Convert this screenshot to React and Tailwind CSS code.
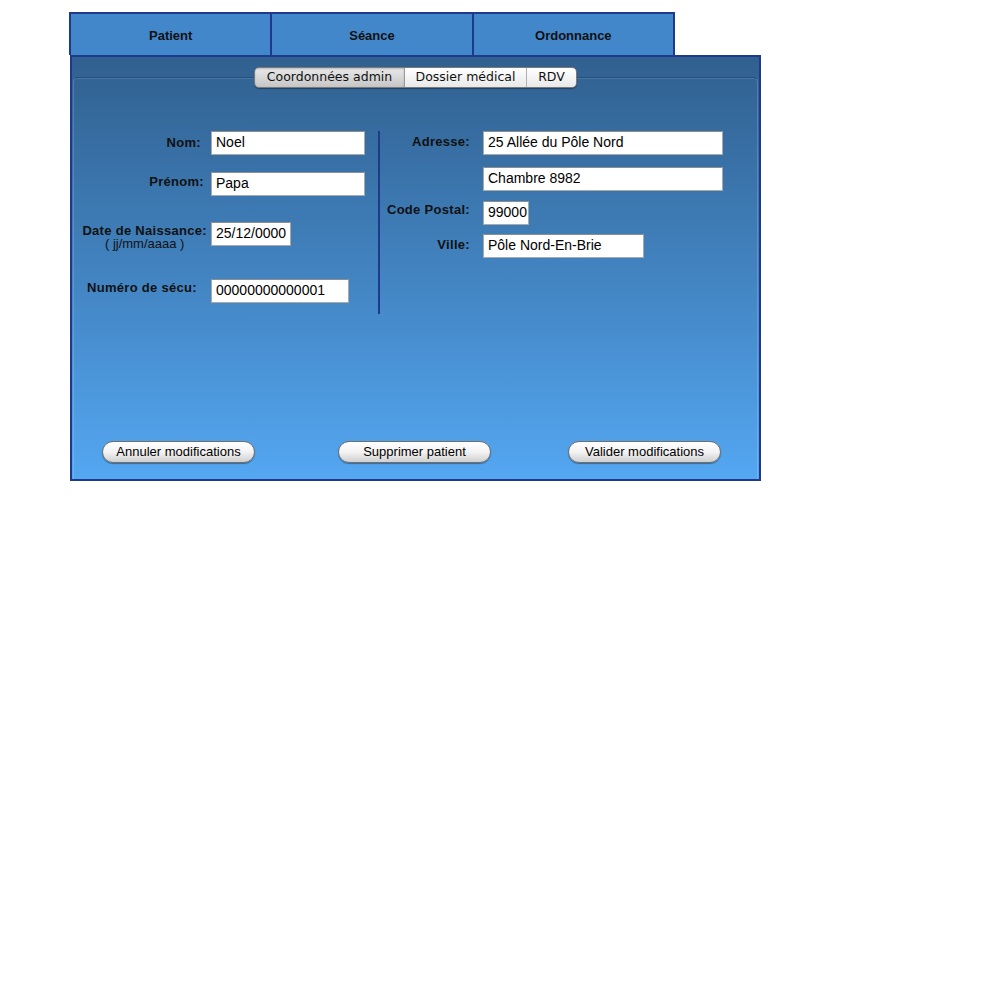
export default function App() {
  const tab =
    "flex-1 flex items-center justify-center pt-[2px] bg-[#4387cb] border-t-2 border-l-2 border-[#1f3a8c] text-[13px] font-bold text-[#111]";
  const field =
    "h-[24px] flex items-center pb-[2px] pl-[4px] bg-white border border-[#a9a9a9] border-t-[#8e8e8e] text-[14px] text-black whitespace-nowrap overflow-hidden";
  const label = "text-[13px] font-bold leading-[16px] text-[#111] tracking-[0.3px] whitespace-nowrap";
  const btn =
    "h-[22px] w-[153px] rounded-full border border-[#6f6f6f] bg-linear-to-b from-white via-[#f3f3f3] to-[#cfcfcf] shadow-[0_1px_1px_rgba(0,0,0,0.35)] flex items-center justify-center text-[13px] text-black";

  return (
    <div className="min-h-[1000px] bg-white pl-[69px] pt-[12px] font-['Liberation_Sans',Arial,sans-serif]">
      {/* top tabs */}
      <div className="flex w-[606px] h-[43px]">
        <div className={tab}>Patient</div>
        <div className={tab}>Séance</div>
        <div className={tab + " border-r-2"}>Ordonnance</div>
      </div>

      {/* panel */}
      <div className="ml-[1px] w-[691px] h-[426px] border-2 border-[#1f3a8c] bg-linear-to-b from-[#30608f] to-[#54a7f2] flex flex-col pt-[10px]">
        {/* segmented control */}
        <div className="relative z-10 self-center flex h-[21px] w-[323px] rounded-[5px] border border-[#7a7a7a] overflow-hidden shadow-[0_1px_1px_rgba(0,0,0,0.35)] font-['DejaVu_Sans',sans-serif] text-[12.5px] text-[#111]">
          <div className="w-[150px] flex items-center justify-center bg-linear-to-b from-[#e9e9e9] to-[#c6c6c6] border-r border-[#9a9a9a] shadow-[inset_0_1px_2px_rgba(0,0,0,0.2)]">
            Coordonnées admin
          </div>
          <div className="w-[122px] flex items-center justify-center bg-linear-to-b from-white to-[#e9e9e9] border-r border-[#b0b0b0]">
            Dossier médical
          </div>
          <div className="flex-1 flex items-center justify-center bg-linear-to-b from-white to-[#e9e9e9]">
            RDV
          </div>
        </div>

        {/* group box */}
        <div className="-mt-[11px] mx-[1px] flex-1 flex flex-col rounded-t-[5px] border-t border-x border-t-[#23507d] border-x-[rgba(255,255,255,0.15)] shadow-[inset_0_1px_0_rgba(255,255,255,0.12)] pt-[53px]">
          <div className="flex">
            {/* left column */}
            <div className="w-[304px] flex flex-col">
              <div className="flex items-start">
                <div className={"w-[137px] text-right pr-[10px] mt-[4px] " + label}>Nom:</div>
                <div className={field + " w-[154px]"}>Noel</div>
              </div>
              <div className="flex items-start mt-[17px]">
                <div className={"w-[137px] text-right pr-[7px] mt-[2px] " + label}>Prénom:</div>
                <div className={field + " w-[154px]"}>Papa</div>
              </div>
              <div className="flex items-start h-[24px] mt-[26px]">
                <div className="w-[137px] flex justify-end pr-[4px] mt-[2px]">
                  <div className="flex flex-col items-center leading-[13px]">
                    <span className="text-[13px] font-bold text-[#111] whitespace-nowrap tracking-[0.3px]">Date de Naissance:</span>
                    <span className="text-[13px] text-[#111] whitespace-nowrap">( jj/mm/aaaa )</span>
                  </div>
                </div>
                <div className={field + " w-[80px]"}>25/12/0000</div>
              </div>
              <div className="flex items-start mt-[33px]">
                <div className={"w-[137px] text-right pr-[14px] mt-[1px] " + label}>Numéro de sécu:</div>
                <div className={field + " w-[138px]"}>00000000000001</div>
              </div>
            </div>

            {/* right column */}
            <div className="h-[183px] border-l-2 border-[#1f3a8c] flex flex-col">
              <div className="flex items-start">
                <div className={"w-[103px] text-right pr-[13px] mt-[3px] " + label}>Adresse:</div>
                <div className={field + " w-[240px]"}>25 Allée du Pôle Nord</div>
              </div>
              <div className="flex items-start mt-[12px]">
                <div className="w-[103px]" />
                <div className={field + " w-[240px]"}>Chambre 8982</div>
              </div>
              <div className="flex items-start mt-[10px]">
                <div className={"w-[103px] text-right pr-[13px] mt-[1px] " + label}>Code Postal:</div>
                <div className={field + " w-[46px]"}>99000</div>
              </div>
              <div className="flex items-start mt-[9px]">
                <div className={"w-[103px] text-right pr-[13px] mt-[3px] " + label}>Ville:</div>
                <div className={field + " w-[161px]"}>Pôle Nord-En-Brie</div>
              </div>
            </div>
          </div>

          {/* buttons */}
          <div className="mt-auto flex pb-[16px]">
            <div className={btn + " ml-[28px]"}>Annuler modifications</div>
            <div className={btn + " ml-[83px]"}>Supprimer patient</div>
            <div className={btn + " ml-[77px]"}>Valider modifications</div>
          </div>
        </div>
      </div>
    </div>
  );
}
